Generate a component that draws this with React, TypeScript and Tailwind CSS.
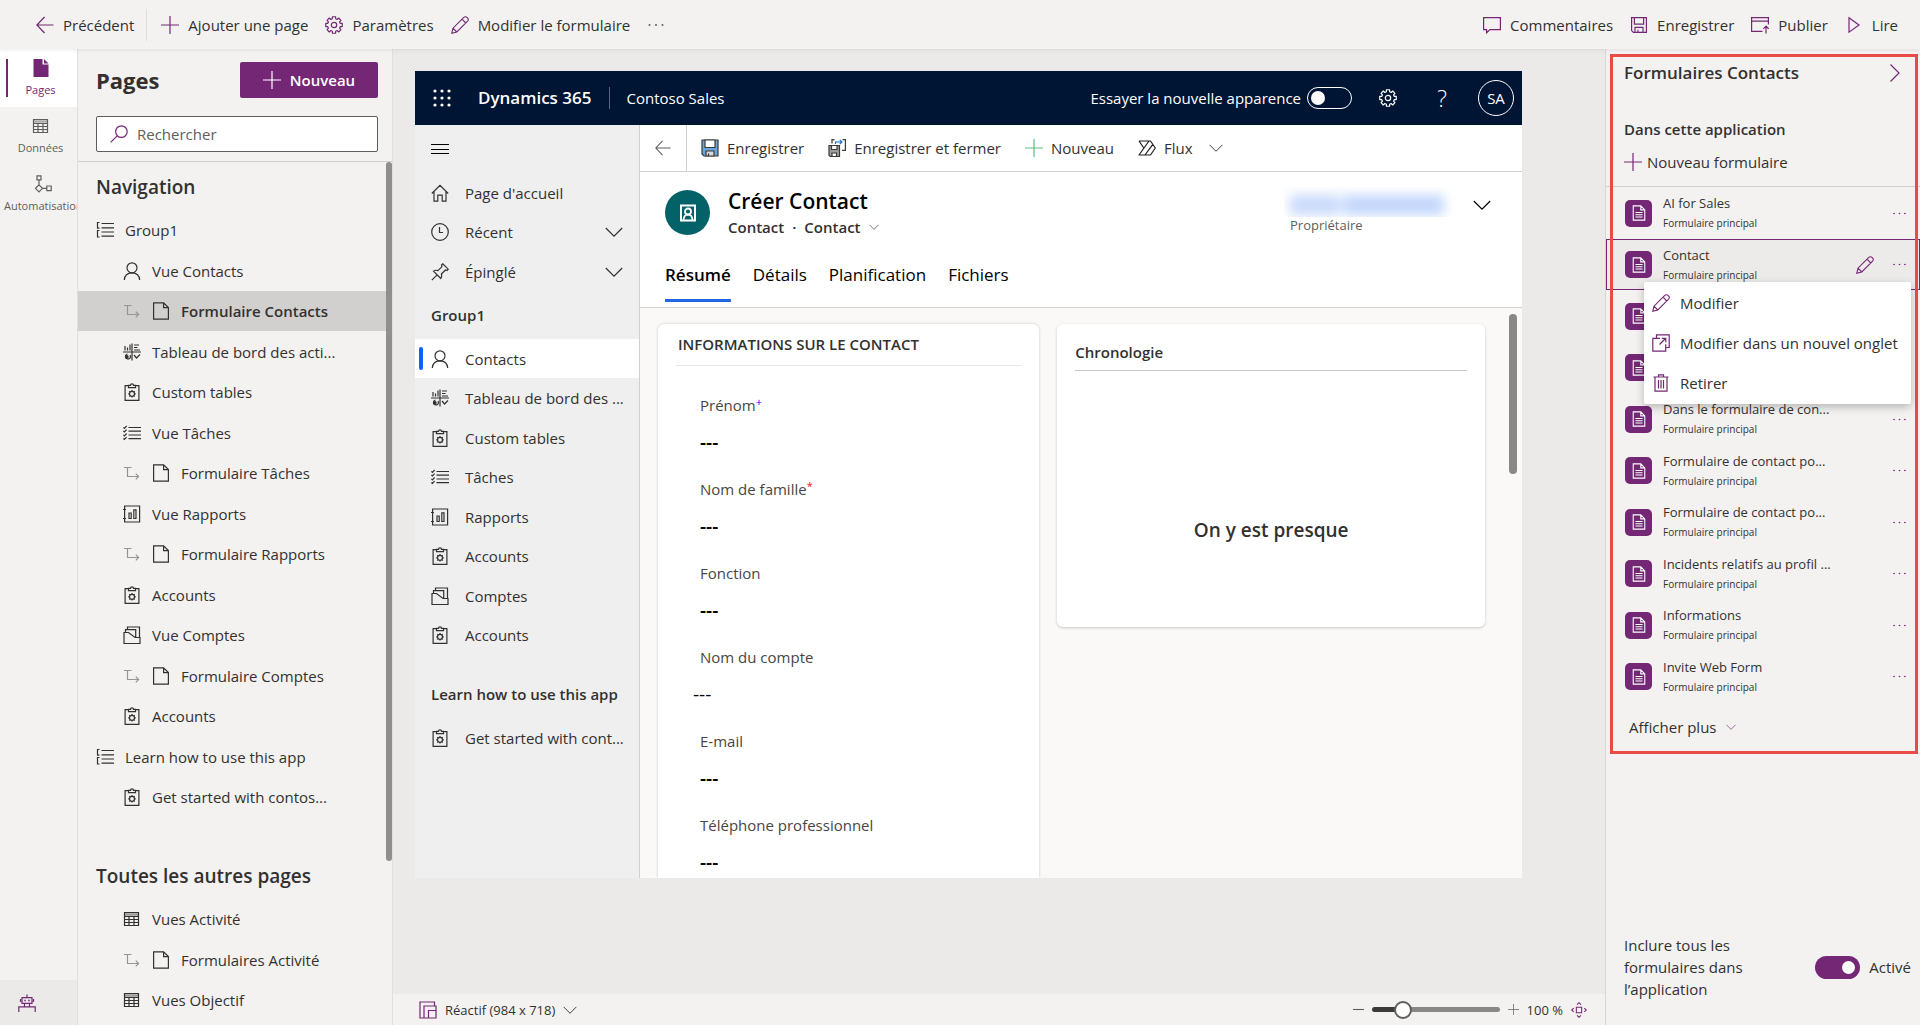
import React, { useState } from 'react';
import type { ReactNode } from 'react';

type IconProps = { className?: string };

function Svg({ className = '', size = 18, children }: IconProps & { size?: number; children: ReactNode }) {
  return (
    <svg width={size} height={size} viewBox="0 0 18 18" fill="none" stroke="currentColor" strokeWidth="1.2" className={`shrink-0 ${className}`} aria-hidden="true">
      {children}
    </svg>
  );
}

// outline of an eight-toothed gear
function gearPath(c: number, inner: number, outer: number) {
  const pts: string[] = [];
  for (let i = 0; i < 8; i++) {
    [[-15, inner], [-11, outer], [11, outer], [15, inner]].forEach(([d, r]) => {
      const a = ((i * 45 + d) * Math.PI) / 180;
      pts.push(`${(c + r * Math.sin(a)).toFixed(2)} ${(c - r * Math.cos(a)).toFixed(2)}`);
    });
  }
  return `M${pts.join('L')}Z`;
}

const BackIcon = (p: IconProps) => <Svg {...p}><path d="M17.5 9H1M8.5 1 .9 9l7.6 8" /></Svg>;
const PlusIcon = (p: IconProps) => <Svg {...p}><path d="M9 0v18M0 9h18" /></Svg>;
const MinusIcon = (p: IconProps) => <Svg {...p}><path d="M0 9h18" strokeWidth="1.8" /></Svg>;
const GearIcon = (p: IconProps) => <Svg {...p}><path d={gearPath(9, 6.4, 8.4)} strokeLinejoin="round" /><circle cx="9" cy="9" r="2.7" /></Svg>;
const PencilIcon = (p: IconProps) => (
  <Svg {...p}><path d="M.8 17.2l1.2-5L12.8 1.4a2.2 2.2 0 0 1 3.2 0l.6.6a2.2 2.2 0 0 1 0 3.2L5.8 16zM11 3.2l3.8 3.8M2 12.2 5.8 16" strokeWidth="1.1" /></Svg>
);
const DotsIcon = (p: IconProps) => (
  <Svg {...p}><g fill="currentColor" stroke="none"><circle cx="2.5" cy="9" r="1" /><circle cx="9" cy="9" r="1" /><circle cx="15.5" cy="9" r="1" /></g></Svg>
);
const CommentIcon = (p: IconProps) => <Svg {...p}><path d="M.6 1.6h16.8v12H7l-3.4 3.2v-3.2h-3z" /></Svg>;
const SaveIcon = (p: IconProps) => <Svg {...p}><path d="M1.6 1.6h14.8v14.8H3.4l-1.8-1.8zM4.4 1.6v6.6h9.2V1.6M5 16.4v-5h8v5M8 16.4v-2.6" /></Svg>;
const PublishIcon = (p: IconProps) => <Svg {...p}><path d="M11.5 15.4H.6V1.6h16.8v7M.6 5.2h16.8M15 17.5v-7M12.4 12.8 15 10.2l2.6 2.6" /></Svg>;
const PlayIcon = (p: IconProps) => <Svg {...p}><path d="M4 1.8 14 9 4 16.2z" /></Svg>;
const SearchIcon = (p: IconProps) => <Svg {...p}><circle cx="11.4" cy="6.6" r="5.8" /><path d="M7.2 10.8.6 17.4" /></Svg>;
const ChevronDown = (p: IconProps) => <Svg {...p}><path d="M.8 5 9 13.2 17.2 5" /></Svg>;
const ChevronRight = (p: IconProps) => <Svg {...p}><path d="M8.5.5 17 9l-8.5 8.5" /></Svg>;
const PageFilledIcon = (p: IconProps) => (
  <Svg {...p}><path d="M1.5 0h9v5.500h6V18h-15z" fill="currentColor" stroke="none" /><path d="M12 0l4.500 4.500H12z" fill="currentColor" stroke="none" /></Svg>
);
const PageIcon = (p: IconProps) => <Svg {...p}><path d="M1.600.8h10l4.800 4.800v11.600H1.600zM11.600.8v4.800h4.800" /></Svg>;
const TableIcon = (p: IconProps) => (
  <Svg {...p}><path d="M1.500 2.500h14v13h-14zM1.500 6.500h14M1.500 9.500h14M1.500 12.500h14M6 6v9.500M11 6v9.500" /><path d="M1.500 4.500h14" strokeWidth="2.500" opacity=".45" /></Svg>
);
const FlowIcon = (p: IconProps) => (
  <Svg {...p}><path d="M3 .8h4v4H3zM5 4.800v5M5 9.800l3.500 3.500L5 16.800l-3.500-3.500zM8.500 13.300h4.300M12.800 11h4.400v4.600h-4.400z" /></Svg>
);
const RobotIcon = (p: IconProps) => (
  <Svg {...p}><path d="M9 .5v3M4 3.600h10v5.800H4zM2.500 5v3M15.500 5v3M6.500 9.400v3M11.500 9.400v3M.8 18v-5.200h16.400V18" /><path d="M6.300 6.500h1.500M10.200 6.500h1.500" strokeWidth="1.600" /></Svg>
);
const GroupIcon = (p: IconProps) => (
  <Svg {...p}><path d="M3.500 1.500h-2v5.600h2M3.500 9.500h-2v6.500h2M5.500 2.500H18M5.500 6.800H18M5.500 11H18M5.500 15.200H18" /></Svg>
);
const PersonIcon = (p: IconProps) => <Svg {...p}><circle cx="9" cy="5.800" r="5" /><path d="M1.300 18c.3-4.500 3.200-7.200 7.700-7.200s7.400 2.700 7.700 7.200" /></Svg>;
const DashboardIcon = (p: IconProps) => (
  <Svg {...p}>
    <path d="M9 .5v17M0 9h18M2 3v4.500M4.500 4.500v3M7 1.500v6M11 2h5M11 4.500h3.500M11 7h6" />
    <path d="M7 12a2.500 2.500 0 1 1-2.500-1M11 12l2.500 3 3.500-3.500" />
    <circle cx="3.800" cy="13.800" r="1.300" fill="currentColor" />
  </Svg>
);
const ClipboardIcon = (p: IconProps) => (
  <Svg {...p}>
    <path d="M5.500 2.600H2.100v14.800h13.800V2.600h-3.400M5.500 4.600V2.400h2a1.500 1.500 0 0 1 3 0h2v2.200z" />
    <circle cx="9" cy="10.800" r="2.500" />
    <path d="M9 7v1.300M9 13.300v1.300M5.200 10.800h1.300M11.500 10.800h1.300M6.300 8.100l.9.9M10.800 12.600l.9.9M11.700 8.100l-.9.900M7.200 12.600l-.9.900" />
  </Svg>
);
const TaskIcon = (p: IconProps) => (
  <Svg {...p}><path d="M5.500 3.500H18M5.500 7.200H18M5.500 11H18M5.500 14.700H18M.4 3.300l1 1L3.600 2M.4 7l1 1 2.200-2.300M.4 10.800l1 1 2.200-2.300M.4 14.500l1 1 2.200-2.300" /></Svg>
);
const ReportIcon = (p: IconProps) => (
  <Svg {...p}><path d="M1.600 1h15v16h-15zM0 4.500h3M0 13.500h3M6 8h2.200v5.500H6zM10.800 4.800H13v8.700h-2.200z" /></Svg>
);
const AccountIcon = (p: IconProps) => (
  <Svg {...p}><path d="M1 6.500h4.500L12 11.500h5v6H1zM2.500 6V3.600h10.200v7.600M4.500 3.500V1h12v10.500" /></Svg>
);
const SubArrowIcon = (p: IconProps) => <Svg {...p}><path d="M1 3.500h7.500M4.500 3.500v9H15.500M12.800 9.700l2.800 2.800-2.800 2.800" /></Svg>;
const HomeIcon = (p: IconProps) => <Svg {...p}><path d="M.8 9.500 9 1.300l8.200 8.200M3 7.600v9.600h3.800v-6h4.400v6H15V7.600" /></Svg>;
const ClockIcon = (p: IconProps) => <Svg {...p}><circle cx="9" cy="9" r="8.300" /><path d="M8.500 4v5.500H12" /></Svg>;
const PinIcon = (p: IconProps) => <Svg {...p}><path d="M.8 17.200l5.400-5.400M2.500 8.200c2-1.300 3.500-1 4.500-.6l4-4L10.500 2l1.300-1.200 5.400 5.400L16 7.500l-1.600-.5-4 4c.4 1.500.5 3-.6 4.500z" /></Svg>;
const NewTabIcon = (p: IconProps) => (
  <Svg {...p}><path d="M4.500 4.300V.8h12.700v12.700h-3.500M8 4.300H.8v12.900h12.900v-7M7.500 10.500l6-6M9.800 4.300h4v4" /></Svg>
);
const TrashIcon = (p: IconProps) => <Svg {...p}><path d="M1.500 3h15M6.500 3V.8h5V3M3 3v14.200h12V3M6.500 6v8.500M9 6v8.500M11.500 6v8.500" /></Svg>;
const FormDocIcon = (p: IconProps) => (
  <Svg {...p}><path d="M2.500 1h8.500l4.500 4.500V17h-13zM11 1v4.500h4.500M5 8.500h8M5 11h8M5 13.500h8" /></Svg>
);
const DeviceIcon = (p: IconProps) => <Svg {...p}><path d="M5 17H1V1h14.500v4M5 17V5h12v12zM9.500 17V9.500H17" /></Svg>;
const FitIcon = (p: IconProps) => (
  <Svg {...p}><path d="M6 6h6v6H6zM6.800 3 9 .8 11.200 3M6.800 15 9 17.200l2.200-2.200M3 6.800.8 9 3 11.200M15 6.800 17.200 9 15 11.200" /></Svg>
);
const ContactBadgeIcon = (p: IconProps) => (
  <Svg {...p}><path d="M2 1.500h14v15H2z" strokeWidth="2" /><circle cx="9" cy="7.500" r="3" strokeWidth="1.800" /><path d="M4.500 16c.3-3.500 2-5.300 4.500-5.300s4.200 1.800 4.500 5.300" strokeWidth="1.800" /></Svg>
);

function ColorSaveIcon({ className }: IconProps) {
  return (
    <Svg className={className}>
      <path d="M1 1h16v16H3l-2-2z" fill="#6ba5dc" stroke="#3b3a39" />
      <path d="M4 1h10v7.500H4z" fill="#fff" stroke="#3b3a39" />
      <path d="M5 12h8v5H5z" fill="#d9d9d9" stroke="#3b3a39" />
      <path d="M7.500 17v-2.500" stroke="#3b3a39" />
    </Svg>
  );
}

function SaveCloseIcon({ className }: IconProps) {
  return (
    <Svg className={className}>
      <path d="M1 6.500h10.500v11H2.200L1 16.300z" fill="#a19f9d" stroke="#3b3a39" />
      <path d="M3.500 6.500h5.500v4H3.500zM4 14h4.500v3.500H4z" fill="#fff" stroke="#3b3a39" />
      <path d="M4 4.500V.6h2.500M14.500.6h2.900v10.800h-3.400" stroke="#3b3a39" />
      <path d="M7.500 5V3h6.500M11.800.8 14 3l-2.200 2.200" stroke="#1f6cbf" />
    </Svg>
  );
}

function FlowRunIcon({ className }: IconProps) {
  return (
    <Svg className={className}>
      <path d="M1 2h11.500L17.300 9l-4.800 7H1l10-14M1 2l4.800 7M14.800 5.400 7 16" stroke="#201f1e" strokeLinejoin="round" />
    </Svg>
  );
}

type NavItem = { label: string; icon: (p: IconProps) => ReactNode; level: 'group' | 'page' | 'form'; active?: boolean };

const navigation: NavItem[] = [
  { label: 'Group1', icon: GroupIcon, level: 'group' },
  { label: 'Vue Contacts', icon: PersonIcon, level: 'page' },
  { label: 'Formulaire Contacts', icon: PageIcon, level: 'form', active: true },
  { label: 'Tableau de bord des acti...', icon: DashboardIcon, level: 'page' },
  { label: 'Custom tables', icon: ClipboardIcon, level: 'page' },
  { label: 'Vue Tâches', icon: TaskIcon, level: 'page' },
  { label: 'Formulaire Tâches', icon: PageIcon, level: 'form' },
  { label: 'Vue Rapports', icon: ReportIcon, level: 'page' },
  { label: 'Formulaire Rapports', icon: PageIcon, level: 'form' },
  { label: 'Accounts', icon: ClipboardIcon, level: 'page' },
  { label: 'Vue Comptes', icon: AccountIcon, level: 'page' },
  { label: 'Formulaire Comptes', icon: PageIcon, level: 'form' },
  { label: 'Accounts', icon: ClipboardIcon, level: 'page' },
  { label: 'Learn how to use this app', icon: GroupIcon, level: 'group' },
  { label: 'Get started with contos...', icon: ClipboardIcon, level: 'page' },
];

const otherPages: NavItem[] = [
  { label: 'Vues Activité', icon: TableIcon, level: 'page' },
  { label: 'Formulaires Activité', icon: PageIcon, level: 'form' },
  { label: 'Vues Objectif', icon: TableIcon, level: 'page' },
];

const siteMap = [
  { label: 'Contacts', icon: PersonIcon, active: true },
  { label: 'Tableau de bord des ...', icon: DashboardIcon },
  { label: 'Custom tables', icon: ClipboardIcon },
  { label: 'Tâches', icon: TaskIcon },
  { label: 'Rapports', icon: ReportIcon },
  { label: 'Accounts', icon: ClipboardIcon },
  { label: 'Comptes', icon: AccountIcon },
  { label: 'Accounts', icon: ClipboardIcon },
];

const fields = [
  { id: 'prenom', label: 'Prénom', mark: '+' },
  { id: 'nom', label: 'Nom de famille', mark: '*' },
  { id: 'fonction', label: 'Fonction' },
  { id: 'compte', label: 'Nom du compte', lookup: true },
  { id: 'email', label: 'E-mail' },
  { id: 'telephone', label: 'Téléphone professionnel' },
];

// rows without a name sit behind the open menu
const forms = [
  'AI for Sales',
  'Contact',
  '',
  '',
  'Dans le formulaire de con...',
  'Formulaire de contact po...',
  'Formulaire de contact po...',
  'Incidents relatifs au profil ...',
  'Informations',
  'Invite Web Form',
];

function TopBar() {
  return (
    <header className="relative z-10 flex h-[49px] shrink-0 items-center bg-[#f3f2f1] pr-[22px] pl-9 shadow-[0_1px_4px_rgba(0,0,0,0.08)]">
      <button className="mr-3 flex items-center gap-[9px]"><BackIcon className="text-[#742774]" />Précédent</button>
      <span className="h-8 w-px bg-[#e1dfdd]" />
      <div className="ml-[14px] flex items-center gap-[17px]">
        <button className="flex items-center gap-[9px]"><PlusIcon className="text-[#742774]" />Ajouter une page</button>
        <button className="flex items-center gap-[9px]"><GearIcon className="text-[#742774]" />Paramètres</button>
        <button className="flex items-center gap-[9px]"><PencilIcon className="text-[#742774]" />Modifier le formulaire</button>
        <button aria-label="Plus"><DotsIcon className="text-[#605e5c]" /></button>
      </div>
      <div className="ml-auto flex items-center gap-[17px]">
        <button className="flex items-center gap-[9px]"><CommentIcon className="text-[#742774]" />Commentaires</button>
        <button className="flex items-center gap-[9px]"><SaveIcon className="text-[#742774]" />Enregistrer</button>
        <button className="flex items-center gap-[9px]"><PublishIcon className="text-[#742774]" />Publier</button>
        <button className="flex items-center gap-[9px]"><PlayIcon className="text-[#742774]" />Lire</button>
      </div>
    </header>
  );
}

function Rail() {
  return (
    <nav className="flex w-[78px] shrink-0 flex-col overflow-hidden border-r border-[#e1dfdd] text-[11px] leading-4 text-[#605e5c]">
      <button className="relative flex h-[58px] min-w-full flex-col items-center justify-center gap-[5px] bg-white pl-1 text-[#742774]">
        <span className="absolute top-2.5 left-1.5 h-[38px] w-0.5 bg-[#742774]" />
        <PageFilledIcon />
        Pages
      </button>
      <button className="flex h-[58px] min-w-full flex-col items-center justify-center gap-[5px] pl-1"><TableIcon />Données</button>
      <button className="flex h-[58px] w-max min-w-full flex-col items-center justify-center gap-[5px] pl-1"><FlowIcon />Automatisation</button>
      <button aria-label="Agent virtuel" className="mt-auto flex h-[45px] items-center bg-[#ebeae8] pl-[18px] text-[#742774]"><RobotIcon /></button>
    </nav>
  );
}

function NavRow({ item }: { item: NavItem }) {
  const Icon = item.icon;
  return (
    <li className={`h-10 even:h-[41px] ${item.active ? 'bg-[#d2d0ce] font-semibold' : ''}`}>
      <a href="#" className={`flex h-full items-center gap-[11px] whitespace-nowrap ${item.level === 'group' ? 'pl-[18px]' : 'pl-[45px]'}`}>
        {item.level === 'form' && <SubArrowIcon className="text-[#979593]" />}
        <Icon />
        {item.label}
      </a>
    </li>
  );
}

function PagesPanel() {
  return (
    <aside className="flex w-[315px] shrink-0 flex-col overflow-hidden border-r border-[#e1dfdd]">
      <div className="shrink-0 border-b border-[#d2d0ce] pt-[13px] pr-[14px] pb-[9px] pl-[18px]">
        <div className="flex items-center justify-between">
          <h1 className="text-[22px] font-bold">Pages</h1>
          <button className="flex h-9 w-[138px] items-center justify-center gap-[9px] rounded-xs bg-[#742774] font-semibold text-white"><PlusIcon />Nouveau</button>
        </div>
        <label className="mt-[18px] flex h-9 items-center gap-[9px] rounded-xs border border-[#605e5c] bg-white px-[13px]">
          <SearchIcon className="text-[#742774]" />
          <input type="search" aria-label="Rechercher" placeholder="Rechercher" className="w-full outline-none placeholder:text-[#605e5c]" />
        </label>
      </div>
      <div className="flex min-h-0 flex-1">
        <div className="min-w-0 flex-1 overflow-hidden">
          <h2 className="flex h-12 items-center pt-0.5 pl-[18px] text-[19px] font-semibold">Navigation</h2>
          <ul>{navigation.map((item, i) => <NavRow key={i} item={item} />)}</ul>
          <h2 className="mt-[34px] flex h-12 items-center pt-0.5 pl-[18px] text-[19px] font-semibold">Toutes les autres pages</h2>
          <ul>{otherPages.map((item, i) => <NavRow key={i} item={item} />)}</ul>
        </div>
        <div className="h-[81%] w-1.5 rounded-full bg-[#918f8d]" />
      </div>
    </aside>
  );
}

function AppHeader() {
  return (
    <div className="flex h-[54px] shrink-0 items-center bg-[#001433] pr-2 pl-[18px] text-white">
      <button aria-label="Applications">
        <svg width="18" height="18" viewBox="0 0 18 18" fill="currentColor">
          {[2, 9, 16].map(y => [2, 9, 16].map(x => <circle key={`${x}-${y}`} cx={x} cy={y} r="1.600" />))}
        </svg>
      </button>
      <span className="ml-[27px] text-[17px] font-semibold">Dynamics 365</span>
      <span className="mr-4 ml-[18px] h-[22px] w-px bg-[#5a6580]" />
      <span>Contoso Sales</span>
      <label className="ml-auto flex items-center gap-1.5">
        Essayer la nouvelle apparence
        <input type="checkbox" className="relative h-[22px] w-[45px] appearance-none rounded-full border border-white before:absolute before:top-[3px] before:left-[3px] before:size-[14px] before:rounded-full before:bg-white" />
      </label>
      <button aria-label="Paramètres" className="ml-[27px]"><GearIcon /></button>
      <button aria-label="Aide" className="mr-6 ml-[33px] w-6 text-[23px] font-light">?</button>
      <button className="flex size-9 items-center justify-center rounded-full border border-white">SA</button>
    </div>
  );
}

function SiteMap() {
  return (
    <nav className="w-[225px] shrink-0 overflow-hidden border-r border-[#d2d0ce] bg-[#efefef]">
      <button aria-label="Menu" className="flex h-12 items-center pl-4"><Svg className="text-black"><path d="M0 4.500h18M0 9.500h18M0 13.500h18" /></Svg></button>
      <ul>
        <li className="flex h-[39px] items-center gap-4 px-4"><HomeIcon /><a href="#">Page d'accueil</a></li>
        <li className="flex h-10 items-center gap-4 px-4"><ClockIcon /><a href="#" className="flex-1">Récent</a><ChevronDown /></li>
        <li className="flex h-[39px] items-center gap-4 px-4"><PinIcon /><a href="#" className="flex-1">Épinglé</a><ChevronDown /></li>
      </ul>
      <h3 className="flex h-12 items-center pl-4 font-semibold">Group1</h3>
      <ul>
        {siteMap.map(({ label, icon: Icon, active }, i) => (
          <li key={i} className={`relative h-[39px] even:h-10 ${active ? 'bg-white' : ''}`}>
            {active && <span className="absolute top-2 left-1 h-[23px] w-1 rounded-xs bg-[#0f62fe]" />}
            <a href="#" className="flex h-full items-center gap-4 pl-4 whitespace-nowrap"><Icon />{label}</a>
          </li>
        ))}
      </ul>
      <h3 className="mt-[15px] flex h-12 items-center pl-4 font-semibold whitespace-nowrap">Learn how to use this app</h3>
      <a href="#" className="flex h-[39px] items-center gap-4 pl-4 whitespace-nowrap"><ClipboardIcon />Get started with cont...</a>
    </nav>
  );
}

function ContactForm() {
  const [tab, setTab] = useState('Résumé');
  return (
    <main className="flex min-w-0 flex-1 flex-col bg-white">
      <div className="flex h-[47px] shrink-0 items-center border-b border-[#d2d0ce]">
        <button aria-label="Retour" className="flex h-full w-[47px] items-center justify-center border-r border-[#d2d0ce] text-[#605e5c]"><BackIcon className="size-4" /></button>
        <div className="flex items-center gap-6 pl-[14px] whitespace-nowrap">
          <button className="flex items-center gap-2"><ColorSaveIcon />Enregistrer</button>
          <button className="flex items-center gap-2"><SaveCloseIcon />Enregistrer et fermer</button>
          <button className="flex items-center gap-2"><PlusIcon className="text-[#58c083]" />Nouveau</button>
          <button className="flex items-center gap-2"><FlowRunIcon />Flux<ChevronDown className="ml-2 size-[14px]" /></button>
        </div>
      </div>
      <div className="shrink-0 border-b border-[#d2d0ce] pr-[31px] pb-[5px] pl-[25px]">
        <div className="flex h-[86px] items-start pt-[15px]">
          <div className="mt-[3px] flex size-[45px] shrink-0 items-center justify-center rounded-full bg-[#036267] text-white"><ContactBadgeIcon /></div>
          <div className="ml-[18px]">
            <h2 className="text-[21px] leading-7 font-semibold text-black">Créer Contact</h2>
            <p className="flex items-center leading-6 font-semibold">
              Contact<span className="mx-2">·</span>
              <button className="flex items-center gap-2">Contact<ChevronDown className="size-[10px]" /></button>
            </p>
          </div>
          <div className="ml-auto">
            <div className="h-[30px] w-[172px] overflow-hidden pt-2">
              <div className="ml-1.5 flex blur-[6px]"><span className="h-5 w-12 bg-[#c9dafb]" /><span className="h-5 w-1.5 bg-[#e6eefd]" /><span className="h-5 w-[100px] bg-[#c3d6fc]" /></div>
            </div>
            <p className="pl-1.5 text-[13px] leading-4 text-[#605e5c]">Propriétaire</p>
          </div>
          <button aria-label="Développer" className="mt-[9px] ml-[17px]"><ChevronDown className="text-black" /></button>
        </div>
        <div role="tablist" className="flex h-11 gap-[22px] text-[17px] leading-6 text-black">
          {['Résumé', 'Détails', 'Planification', 'Fichiers'].map(t => (
            <button key={t} role="tab" aria-selected={tab === t} onClick={() => setTab(t)} className={`flex items-start border-b-3 pt-[5px] ${tab === t ? 'border-[#2266e3] font-semibold' : 'border-transparent'}`}>
              {t}
            </button>
          ))}
        </div>
      </div>
      <div className="flex min-h-0 flex-1 overflow-hidden bg-[#faf9f8] pl-[18px]">
        <section className="mt-4 flex-[379] rounded-t-md bg-white px-[18px] pt-2 shadow-[0_0_3px_rgba(0,0,0,0.2)]">
          <h3 className="border-b border-[#e8e6e4] pb-[9px] pl-0.5 leading-6 font-semibold">INFORMATIONS SUR LE CONTACT</h3>
          <div className="pt-[27px] pl-[17px]">
            {fields.map(f => (
              <div key={f.id} className="h-[84px]">
                <label htmlFor={f.id} className="block pl-[7px] leading-6 text-[#484644]">
                  {f.label}
                  {f.mark && <sup className={`text-[11px] ${f.mark === '*' ? 'text-[#e81123]' : 'text-[#0000ff]'}`}>{f.mark}</sup>}
                </label>
                <input id={f.id} defaultValue="---" className={`mt-[13px] block h-6 w-full text-[19px] text-black outline-none ${f.lookup ? '' : 'pl-[7px] font-semibold'}`} />
              </div>
            ))}
          </div>
        </section>
        <section className="mt-4 ml-[18px] flex-[430] self-start rounded-md bg-white px-[18px] pt-4 pb-[83px] shadow-[0_1px_3px_rgba(0,0,0,0.2)]">
          <h3 className="border-b border-[#c8c6c4] pb-1.5 leading-6 font-semibold">Chronologie</h3>
          <p className="pt-[145px] text-center text-[19px] leading-7 font-semibold">On y est presque</p>
        </section>
        <div className="mt-1.5 mr-[5px] ml-6 h-[28%] w-2 rounded-full bg-[#8a8886]" />
      </div>
    </main>
  );
}

function BottomBar() {
  const [zoom, setZoom] = useState(20);
  return (
    <footer className="flex h-[31px] shrink-0 items-center bg-[#f3f2f1] pr-[18px] pl-[26px] text-[13px]">
      <button className="flex items-center gap-2"><DeviceIcon className="text-[#742774]" />Réactif (984 x 718)<ChevronDown className="size-[14px]" /></button>
      <div className="ml-auto flex items-center gap-2">
        <button aria-label="Zoom arrière" onClick={() => setZoom(Math.max(0, zoom - 5))}><MinusIcon className="size-[11px] text-[#605e5c]" /></button>
        <input
          type="range"
          aria-label="Zoom"
          value={zoom}
          onChange={e => setZoom(Number(e.target.value))}
          style={{ backgroundImage: `linear-gradient(to right, #3b3a39 ${zoom}%, #8a8886 ${zoom}%)` }}
          className="h-[5px] w-[128px] appearance-none rounded-full [&::-webkit-slider-thumb]:size-[18px] [&::-webkit-slider-thumb]:appearance-none [&::-webkit-slider-thumb]:rounded-full [&::-webkit-slider-thumb]:border-2 [&::-webkit-slider-thumb]:border-[#605e5c] [&::-webkit-slider-thumb]:bg-white"
        />
        <button aria-label="Zoom avant" onClick={() => setZoom(Math.min(100, zoom + 5))}><PlusIcon className="size-[11px] text-[#605e5c]" /></button>
        <span>100 %</span>
        <button aria-label="Ajuster"><FitIcon className="size-4 text-[#742774]" /></button>
      </div>
    </footer>
  );
}

function FormMenu() {
  return (
    <div role="menu" className="absolute top-[43px] right-[9px] left-[38px] z-10 rounded-xs bg-white py-px shadow-[0_3px_8px_rgba(0,0,0,0.25)]">
      <button role="menuitem" className="flex h-10 w-full items-center gap-[10px] pl-2"><PencilIcon className="text-[#742774]" />Modifier</button>
      <button role="menuitem" className="flex h-10 w-full items-center gap-[10px] pl-2 whitespace-nowrap"><NewTabIcon className="text-[#742774]" />Modifier dans un nouvel onglet</button>
      <button role="menuitem" className="flex h-10 w-full items-center gap-[10px] pl-2"><TrashIcon className="text-[#742774]" />Retirer</button>
    </div>
  );
}

function FormsPanel() {
  const selected = 1;
  return (
    <aside className="flex w-[315px] shrink-0 flex-col border-l border-[#d8d6d4]">
      <div className="relative pb-0.5">
        <div className="flex h-12 items-center justify-between pr-5 pl-[18px]">
          <h2 className="text-[17px] font-semibold">Formulaires Contacts</h2>
          <button aria-label="Réduire"><ChevronRight className="text-[#742774]" /></button>
        </div>
        <div className="border-b border-[#d2d0ce] pt-5 pb-3 pl-[18px] leading-6">
          <h3 className="font-semibold">Dans cette application</h3>
          <button className="mt-[9px] flex items-center gap-[5px]"><PlusIcon className="text-[#742774]" />Nouveau formulaire</button>
        </div>
        <ul>
          {forms.map((name, i) => (
            <li key={i} className={`relative flex h-[52px] items-center pr-[13px] pl-[19px] even:h-[51px] ${i === selected ? 'bg-[#edebe9] inset-ring inset-ring-[#742774]' : ''}`}>
              <span className="flex size-[27px] shrink-0 items-center justify-center rounded-[5px] bg-[#742774] text-white"><FormDocIcon className="size-4" /></span>
              {name && (
                <>
                  <div className="ml-[11px] flex-1 pb-0.5">
                    <p className="text-[13px] leading-5">{name}</p>
                    <p className="mt-0.5 text-[10px] leading-4">Formulaire principal</p>
                  </div>
                  {i === selected && <button aria-label="Modifier" className="mr-[18px]"><PencilIcon className="text-[#742774]" /></button>}
                  <button aria-label="Plus d'options"><DotsIcon className="size-[15px] text-[#742774]" /></button>
                </>
              )}
              {i === selected && <FormMenu />}
            </li>
          ))}
        </ul>
        <button className="flex h-[50px] items-center gap-[9px] pl-[23px]">Afficher plus<ChevronDown className="size-[10px] text-[#742774]" /></button>
        <div className="pointer-events-none absolute top-[5px] right-0.5 bottom-0 left-1 border-3 border-[#ea4b44]" />
      </div>
      <div className="mt-auto flex items-center justify-between pr-[9px] pb-[25px] pl-[18px]">
        <label htmlFor="include-all" className="w-[130px] leading-[22px]">Inclure tous les formulaires dans l’application</label>
        <div className="flex items-center gap-[9px]">
          <input id="include-all" type="checkbox" defaultChecked className="relative h-[23px] w-[45px] appearance-none rounded-full bg-[#742774] before:absolute before:top-[5px] before:right-[5px] before:size-[13px] before:rounded-full before:bg-white" />
          <span>Activé</span>
        </div>
      </div>
    </aside>
  );
}

export default function App() {
  return (
    <div className="flex h-screen flex-col overflow-hidden bg-[#f3f2f1] font-['Open_Sans','Noto_Sans',sans-serif] text-[15px] leading-5 text-[#323130]">
      <TopBar />
      <div className="flex min-h-0 flex-1">
        <Rail />
        <PagesPanel />
        <div className="flex min-w-0 flex-1 flex-col">
          <div className="flex min-h-0 flex-1 bg-[#ebeae8] pt-[22px] pr-[83px] pb-[116px] pl-[22px]">
            <div className="flex min-w-0 flex-1 flex-col overflow-hidden">
              <AppHeader />
              <div className="flex min-h-0 flex-1">
                <SiteMap />
                <ContactForm />
              </div>
            </div>
          </div>
          <BottomBar />
        </div>
        <FormsPanel />
      </div>
    </div>
  );
}
